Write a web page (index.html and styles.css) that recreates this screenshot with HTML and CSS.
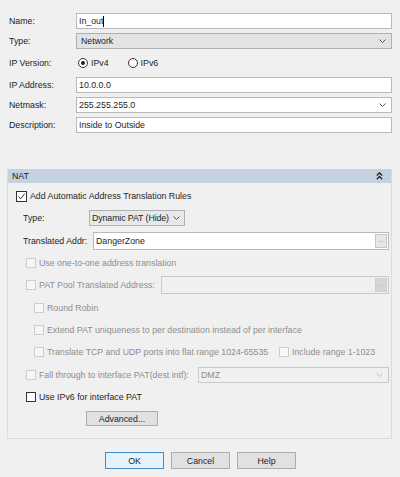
FILE: index.html
```html
<!DOCTYPE html>
<html>
<head>
<meta charset="utf-8">
<link rel="stylesheet" href="styles.css">
</head>
<body>
<div class="top">
  <div class="lbl">Name:</div>
  <div class="field"><span>In_out</span><span class="caret"></span></div>
  <div class="lbl">Type:</div>
  <div class="field select"><span>Network</span><svg class="chev" width="7" height="4" viewBox="0 0 7 4"><path d="M0.5 0.5 L3.5 3.5 L6.5 0.5" fill="none" stroke="#555" stroke-width="1"/></svg></div>
  <div class="lbl">IP Version:</div>
  <div class="radios">
    <span class="radio on"></span><span class="rtext">IPv4</span>
    <span class="radio"></span><span class="rtext">IPv6</span>
  </div>
  <div class="lbl">IP Address:</div>
  <div class="field"><span>10.0.0.0</span></div>
  <div class="lbl">Netmask:</div>
  <div class="field netmask"><span>255.255.255.0</span><svg class="chev" width="7" height="4" viewBox="0 0 7 4"><path d="M0.5 0.5 L3.5 3.5 L6.5 0.5" fill="none" stroke="#555" stroke-width="1"/></svg></div>
  <div class="lbl">Description:</div>
  <div class="field"><span>Inside to Outside</span></div>
</div>

<div class="panel">
  <div class="phead"><span>NAT</span>
    <svg class="collapse" width="7" height="8" viewBox="0 0 7 8"><path d="M0.8 3.5 L3.5 0.8 L6.2 3.5 M0.8 7.2 L3.5 4.5 L6.2 7.2" fill="none" stroke="#222" stroke-width="1.3"/></svg>
  </div>
  <div class="pbody">
    <div class="row">
      <span class="cb dark checked"><svg width="9" height="9" viewBox="0 0 9 9"><path d="M1.5 4.5 L3.7 6.8 L7.8 1.6" fill="none" stroke="#333" stroke-width="1"/></svg></span>
      <span class="cbtext">Add Automatic Address Translation Rules</span>
    </div>
    <div class="row ind1">
      <span class="flabel type">Type:</span>
      <div class="field dyn"><span>Dynamic PAT (Hide)</span><svg class="chev" width="7" height="4" viewBox="0 0 7 4"><path d="M0.5 0.5 L3.5 3.5 L6.5 0.5" fill="none" stroke="#555" stroke-width="1"/></svg></div>
    </div>
    <div class="row ind1">
      <span class="flabel trans">Translated Addr:</span>
      <div class="field tall grow"><span>DangerZone</span><span class="dots">...</span></div>
    </div>
    <div class="row ind2 dis">
      <span class="cb"></span><span class="cbtext">Use one-to-one address translation</span>
    </div>
    <div class="row ind2 dis">
      <span class="cb"></span><span class="cbtext pool">PAT Pool Translated Address:</span>
      <div class="field tall grow off"><span></span><span class="dots">...</span></div>
    </div>
    <div class="row ind3 dis">
      <span class="cb"></span><span class="cbtext">Round Robin</span>
    </div>
    <div class="row ind3 dis">
      <span class="cb"></span><span class="cbtext">Extend PAT uniqueness to per destination instead of per interface</span>
    </div>
    <div class="row ind3 dis">
      <span class="cb"></span><span class="cbtext tcp">Translate TCP and UDP ports into flat range 1024-65535</span>
      <span class="cb"></span><span class="cbtext">Include range 1-1023</span>
    </div>
    <div class="row ind2 dis">
      <span class="cb"></span><span class="cbtext fall">Fall through to interface PAT(dest intf):</span>
      <div class="field grow off"><span>DMZ</span><svg class="chev" width="7" height="4" viewBox="0 0 7 4"><path d="M0.5 0.5 L3.5 3.5 L6.5 0.5" fill="none" stroke="#bbb" stroke-width="1"/></svg></div>
    </div>
    <div class="row ind2">
      <span class="cb dark"></span><span class="cbtext">Use IPv6 for interface PAT</span>
    </div>
    <div class="advrow">
      <button class="btn adv">Advanced...</button>
    </div>
  </div>
</div>

<div class="buttons">
  <button class="btn def">OK</button>
  <button class="btn">Cancel</button>
  <button class="btn">Help</button>
</div>
</body>
</html>
```

FILE: styles.css
```css
* { box-sizing: border-box; }

body {
  margin: 0;
  width: 400px;
  height: 477px;
  overflow: hidden;
  background: #f0f0f0;
  font-family: "Liberation Sans", Arial, sans-serif;
  font-size: 8.8px;
  color: #1e1e1e;
}

.top {
  display: grid;
  grid-template-columns: 67px 1fr;
  grid-template-rows: 20px 20px 24px 20px 20px 20px;
  align-items: center;
  padding: 11px 8px 0 9px;
}

.lbl { color: #222; }

.field {
  height: 16px;
  display: flex;
  align-items: center;
  justify-content: space-between;
  padding: 0 5px 0 2px;
  background: #fff;
  border: 1px solid #b9b9b9;
  white-space: nowrap;
}

.field.select {
  background: #e3e3e3;
  border-color: #b0b0b0;
  padding-left: 4px;
}

.caret {
  display: inline-block;
  width: 1px;
  height: 11px;
  background: #000;
  margin-right: auto;
}

.chev { flex: none; }

.radios {
  display: flex;
  align-items: center;
  padding-left: 2px;
}

.radio {
  width: 10px;
  height: 10px;
  border: 1px solid #333;
  border-radius: 50%;
  background: #fff;
  display: flex;
  align-items: center;
  justify-content: center;
}

.radio.on::after {
  content: "";
  width: 4px;
  height: 4px;
  border-radius: 50%;
  background: #222;
}

.rtext { margin: 0 19px 0 3px; }

.panel {
  margin: 34px 8px 0 7px;
  border: 1px solid #d4dce6;
  border-top: none;
  height: 270px;
}

.phead {
  height: 14px;
  background: #c4d1de;
  display: flex;
  align-items: center;
  justify-content: space-between;
  padding: 0 8px 0 4px;
  color: #1a1a1a;
}

.pbody {
  display: grid;
  grid-auto-rows: 22.33px;
  padding: 2px 2px 0 8px;
}

.row {
  display: flex;
  align-items: center;
  white-space: nowrap;
}

.ind1 { padding-left: 7px; }
.ind2 { padding-left: 10px; }
.ind3 { padding-left: 18px; }

.cb {
  flex: none;
  width: 10px;
  height: 10px;
  border: 1px solid #cdcdcd;
  background: #f7f7f7;
  display: flex;
  align-items: center;
  justify-content: center;
}

.cb.dark {
  border-color: #333;
  background: #fff;
}

.cb.checked {
  width: 11px;
  height: 11px;
}

.cbtext { margin-left: 3px; }

.dis { color: #8e8e8e; }

.flabel { flex: none; }
.flabel.type { width: 66px; }
.flabel.trans { width: 70px; }

.field.dyn {
  width: 96px;
  height: 16px;
  background: #e8e8e8;
  border-color: #b0b0b0;
  padding-left: 2px;
  padding-right: 4px;
  letter-spacing: -0.1px;
}

.field.dyn .chev { margin-left: 3px; }

.field.tall { height: 18px; padding-right: 1px; }

.grow { flex: 1; }

.dots {
  width: 12px;
  height: 14px;
  background: #e6e6e6;
  border: 1px solid #c4c4c4;
  font-size: 6px;
  line-height: 10px;
  text-align: center;
  color: #555;
}

.field.off {
  background: #f0f0f0;
  border-color: #c9c9c9;
  color: #8e8e8e;
}

.field.off .dots {
  background: #d6d6d6;
  border-color: #cdcdcd;
  color: #999;
}

.pool { width: 122px; }
.tcp { width: 232px; }
.fall { width: 159px; }

.advrow {
  padding-left: 70px;
  padding-top: 3px;
}

.btn {
  font-family: "Liberation Sans", Arial, sans-serif;
  font-size: 8.8px;
  color: #1e1e1e;
  background: #e1e1e1;
  border: 1px solid #adadad;
  height: 17px;
  width: 59px;
  padding: 0;
  margin: 0;
}

.btn.adv {
  width: 72px;
  height: 15px;
}

.btn.def {
  background: #e5f1fb;
  border-color: #3f8ccd;
}

.buttons {
  display: flex;
  justify-content: center;
  gap: 7px;
  margin-top: 13px;
  padding-left: 1px;
}
```
